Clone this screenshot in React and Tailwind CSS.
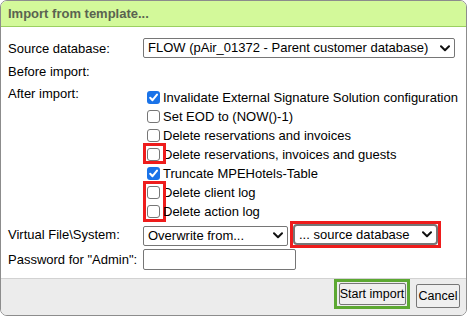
import React from "react";

function Chevron() {
  return (
    <svg width="10" height="7" viewBox="0 0 10 7" className="shrink-0">
      <path d="M1 1.2 L5 5.2 L9 1.2" fill="none" stroke="#111" strokeWidth="2" strokeLinecap="round" strokeLinejoin="round" />
    </svg>
  );
}

function Select({ children, className = "" }) {
  return (
    <div className={`flex items-center justify-between shrink-0 bg-white border border-[#767676] rounded-[2px] pl-[4px] pr-[4px] text-[13px] text-black ${className}`}>
      <span className="whitespace-nowrap leading-[16px]">{children}</span>
      <Chevron />
    </div>
  );
}

function Check({ checked, label, mark }) {
  return (
    <div className="relative flex items-center h-[19px]">
      <div className="relative w-[13px] h-[13px] ml-[4px] mr-[3px] shrink-0">
        {checked ? (
          <div className="w-[13px] h-[13px] rounded-[3px] bg-[#1a73e8] flex items-center justify-center">
            <svg width="11" height="11" viewBox="0 0 11 11">
              <path d="M2.2 5.8 L4.5 8.2 L9 2.6" fill="none" stroke="white" strokeWidth="2" strokeLinecap="round" strokeLinejoin="round" />
            </svg>
          </div>
        ) : (
          <div className="w-[13px] h-[13px] rounded-[3px] border border-[#767676] bg-white" />
        )}
      </div>
      <span className="text-[13px] leading-none text-black whitespace-nowrap">{label}</span>
      {mark === "single" && (
        <div className="absolute left-0 top-[-2px] w-[23px] h-[21px] border-[3px] border-[#ee1c1c]" />
      )}
      {mark === "double" && (
        <div className="absolute left-0 top-[-2px] w-[23px] h-[41px] border-[3px] border-[#ee1c1c]" />
      )}
    </div>
  );
}

export default function App() {
  return (
    <div className="w-[467px] h-[316px] bg-white font-['Liberation_Sans',Arial,sans-serif]">
      <div className="w-[467px] h-[316px] border border-[#8c8c8c] rounded-[7px] overflow-hidden flex flex-col bg-white">
        <div className="h-[26px] shrink-0 bg-[#d3f99a] border-b border-[#9bd060] flex items-center pl-[7px]">
          <span className="text-[13px] font-bold text-[#5a6350] leading-none">Import from template...</span>
        </div>
        <div className="flex-1 px-[7px] pt-[11px]">
          <div className="flex items-center h-[20px]">
            <div className="w-[135px] shrink-0 text-[13px] leading-none text-black">Source database:</div>
            <Select className="w-[312px] h-[20px]">FLOW (pAir_01372 - Parent customer database)</Select>
          </div>
          <div className="flex items-center h-[18px] mt-[4px]">
            <div className="text-[13px] leading-none text-black">Before import:</div>
          </div>
          <div className="flex mt-[7px]">
            <div className="w-[135px] shrink-0 text-[13px] leading-none text-black">After import:</div>
            <div className="flex flex-col mt-[1px]">
              <Check checked label="Invalidate External Signature Solution configuration" />
              <Check label="Set EOD to (NOW()-1)" />
              <Check label="Delete reservations and invoices" />
              <Check label="Delete reservations, invoices and guests" mark="single" />
              <Check checked label="Truncate MPEHotels-Table" />
              <Check label="Delete client log" mark="double" />
              <Check label="Delete action log" />
            </div>
          </div>
          <div className="flex items-center h-[27px]">
            <div className="w-[135px] shrink-0 text-[13px] leading-none text-black">Virtual File\System:</div>
            <Select className="w-[145px] h-[20px] mt-[2px]">Overwrite from...</Select>
            <div className="ml-[2px] w-[151px] h-[27px] shrink-0 border-[3px] border-[#ee1c1c] flex items-center justify-center">
              <Select className="w-[145px] h-[21px] border-2 border-[#1a5fdb] rounded-[4px] pl-[4px]">... source database</Select>
            </div>
          </div>
          <div className="flex items-center h-[21px] mt-[1px]">
            <div className="w-[135px] shrink-0 text-[13px] leading-none text-black">Password for "Admin":</div>
            <div className="w-[153px] h-[21px] shrink-0 border border-[#767676] rounded-[2px] bg-white" />
          </div>
        </div>
        <div className="h-[37px] shrink-0 bg-[#ececec] border-t border-[#d2d2d2] flex items-start justify-end pr-[6px]">
          <div className="w-[76px] h-[30px] border-[3px] border-[#5ca832] flex items-center justify-center">
            <button className="h-[22px] w-[67px] bg-[#efefef] border border-[#767676] rounded-[2px] text-[12.5px] leading-none text-black whitespace-nowrap px-0">Start import</button>
          </div>
          <button className="ml-[6px] mt-[5px] h-[24px] w-[44px] bg-[#efefef] border border-[#767676] rounded-[2px] text-[12.5px] leading-none text-black whitespace-nowrap px-0">Cancel</button>
        </div>
      </div>
    </div>
  );
}
